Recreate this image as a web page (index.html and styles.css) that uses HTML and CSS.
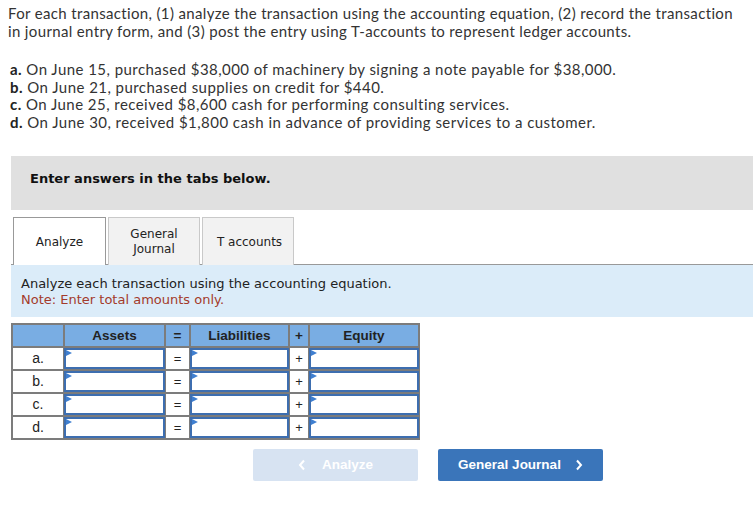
FILE: index.html
```html
<!DOCTYPE html>
<html>
<head>
<meta charset="utf-8">
<link rel="stylesheet" href="styles.css">
</head>
<body>
<div class="page">
  <p class="intro">For each transaction, (1) analyze the transaction using the accounting equation, (2) record the transaction in journal entry form, and (3) post the entry using T-accounts to represent ledger accounts.</p>
  <ul class="items">
    <li><b>a.</b> On June 15, purchased $38,000 of machinery by signing a note payable for $38,000.</li>
    <li><b>b.</b> On June 21, purchased supplies on credit for $440.</li>
    <li><b>c.</b> On June 25, received $8,600 cash for performing consulting services.</li>
    <li><b>d.</b> On June 30, received $1,800 cash in advance of providing services to a customer.</li>
  </ul>
  <div class="instr">Enter answers in the tabs below.</div>
  <div class="tabs">
    <div class="tab active">Analyze</div>
    <div class="tab">General<br>Journal</div>
    <div class="tab">T accounts</div>
  </div>
  <div class="panel">
    <div>Analyze each transaction using the accounting equation.</div>
    <div class="note">Note: Enter total amounts only.</div>
  </div>
  <table class="eq">
    <colgroup>
      <col class="c-lbl"><col class="c-a"><col class="c-op1"><col class="c-l"><col class="c-op2"><col class="c-e">
    </colgroup>
    <thead>
      <tr><th></th><th>Assets</th><th>=</th><th>Liabilities</th><th>+</th><th>Equity</th></tr>
    </thead>
    <tbody>
      <tr><td class="lbl">a.</td><td class="in"><div class="box"></div></td><td class="op">=</td><td class="in"><div class="box"></div></td><td class="op">+</td><td class="in"><div class="box"></div></td></tr>
      <tr><td class="lbl">b.</td><td class="in"><div class="box"></div></td><td class="op">=</td><td class="in"><div class="box"></div></td><td class="op">+</td><td class="in"><div class="box"></div></td></tr>
      <tr><td class="lbl">c.</td><td class="in"><div class="box"></div></td><td class="op">=</td><td class="in"><div class="box"></div></td><td class="op">+</td><td class="in"><div class="box"></div></td></tr>
      <tr><td class="lbl">d.</td><td class="in"><div class="box"></div></td><td class="op">=</td><td class="in"><div class="box"></div></td><td class="op">+</td><td class="in"><div class="box"></div></td></tr>
    </tbody>
  </table>
  <div class="nav">
    <div class="btn disabled"><svg width="8" height="12" viewBox="0 0 8 12"><path d="M6 1.5 L2 6 L6 10.5" fill="none" stroke="#fff" stroke-width="2"/></svg><span>Analyze</span></div>
    <div class="btn primary"><span>General Journal</span><svg width="8" height="12" viewBox="0 0 8 12"><path d="M2 1.5 L6 6 L2 10.5" fill="none" stroke="#fff" stroke-width="2"/></svg></div>
  </div>
</div>
</body>
</html>
```
FILE: styles.css
```css
* { box-sizing: border-box; }
html, body { margin: 0; padding: 0; background: #fff; }
.page { width: 753px; padding-top: 4px; }
.intro {
  margin: 0;
  padding: 0 8px;
  font-family: Lato, "Liberation Sans", sans-serif;
  font-size: 15px;
  letter-spacing: 0.35px;
  line-height: 18px;
  color: #333;
}
.items {
  list-style: none;
  margin: 21px 0 0;
  padding: 0 10px;
  font-family: Lato, "Liberation Sans", sans-serif;
  font-size: 15px;
  letter-spacing: 0.45px;
  line-height: 17.7px;
  color: #333;
}
.items b { color: #222; }
.instr {
  margin: 24px 0 0 11px;
  height: 54px;
  background: #e0e0e0;
  padding: 15px 0 0 19px;
  font-family: "DejaVu Sans", Verdana, sans-serif;
  font-weight: bold;
  font-size: 13px;
  line-height: 16px;
  color: #111;
}
.tabs {
  margin: 7px 0 0 11px;
  padding-left: 2px;
  display: flex;
  gap: 2px;
  border-bottom: 1px solid #999;
  height: 48px;
}
.tab {
  width: 93px;
  height: 48px;
  display: flex;
  align-items: center;
  justify-content: center;
  text-align: center;
  padding-top: 2px;
  background: #f2f2f2;
  border: 1px solid #c9c9c9;
  border-bottom: none;
  font-family: "DejaVu Sans", Verdana, sans-serif;
  font-size: 12px;
  line-height: 15px;
  color: #222;
}
.tab.active {
  background: #fff;
  border: 1px solid #999;
  border-bottom: none;
}
.tab + .tab { width: 92px; }
.tab:last-child { padding-left: 3px; }
.panel {
  margin-left: 11px;
  height: 52px;
  background: #dbecf9;
  padding: 11px 0 0 10px;
  font-family: "DejaVu Sans", Verdana, sans-serif;
  font-size: 13px;
  line-height: 16px;
  color: #222;
}
.note { color: #a33b2b; }
.eq {
  margin: 6px 0 0 11px;
  border-collapse: collapse;
  table-layout: fixed;
  width: 407px;
  font-family: "Liberation Sans", Arial, sans-serif;
  font-size: 13px;
  color: #222;
}
.c-lbl { width: 52px; }
.c-a { width: 101px; }
.c-op1 { width: 25px; }
.c-l { width: 99px; }
.c-op2 { width: 20px; }
.c-e { width: 110px; }
.eq th {
  background: #79ade3;
  border: 2px solid #7c7c7c;
  height: 23px;
  padding: 0;
  font-size: 13.5px;
  font-weight: bold;
  text-align: center;
  color: #222;
}
.eq td {
  border: 2px solid #7c7c7c;
  height: 23px;
  padding: 0;
  text-align: center;
  vertical-align: middle;
}
.eq td.lbl { font-size: 14px; }
.eq td.in { padding: 0; }
.box {
  position: relative;
  height: 21px;
  border: 2px solid #3d6eb0;
  background: #fff;
  margin: 0 -1px;
}
.box::before {
  content: "";
  position: absolute;
  left: 0;
  top: 0;
  border-left: 6px solid #3f7fd0;
  border-top: 3px solid transparent;
  border-bottom: 3px solid transparent;
}
.nav {
  margin-top: 9px;
  padding-left: 253px;
  display: flex;
  gap: 20px;
}
.btn {
  width: 165px;
  height: 32px;
  border-radius: 2px;
  display: flex;
  align-items: center;
  justify-content: center;
  gap: 16px;
  font-family: "Liberation Sans", Arial, sans-serif;
  font-weight: bold;
  font-size: 13.5px;
  color: #fff;
}
.btn.disabled { background: #d7e3f2; }
.btn.primary { background: #3a75ba; gap: 14px; padding-left: 0; }
```
